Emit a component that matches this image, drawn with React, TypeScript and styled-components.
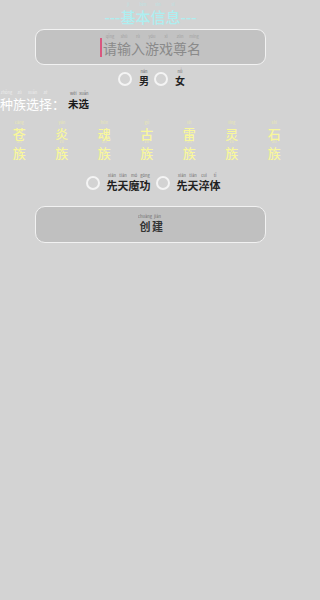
import React from 'react';
import styled, { createGlobalStyle } from 'styled-components';

const GlobalStyle = createGlobalStyle`
  html, body {
    margin: 0;
    padding: 0;
    background-color: #d3d3d3;
    font-family: "Noto Sans CJK SC", "Noto Sans", sans-serif;
  }
`;

const Page = styled.div`
  width: 301px;
  height: 600px;
  display: flex;
  flex-direction: column;
  overflow: hidden;
`;

const Title = styled.div`
  padding-top: 8px;
  height: 21px;
  line-height: 17px;
  text-align: center;
  font-size: 15px;
  font-weight: 500;
  color: #aeeef0;
`;

const Field = styled.div`
  margin: 0 35px;
  height: 36px;
  box-sizing: border-box;
  border: 1.5px solid #f2f2f2;
  border-radius: 9px;
  background-color: #c2c2c2;
  display: flex;
  align-items: center;
  justify-content: center;
  font-size: 14px;
  color: #8a8a8a;
`;

const Caret = styled.span`
  width: 2px;
  height: 19px;
  margin-right: 1px;
  background-color: #d9577f;
`;

const OptionRow = styled.div<{ $height: number; $shift?: number; $top?: number }>`
  height: ${({ $height }) => $height}px;
  margin-top: ${({ $top }) => $top ?? 0}px;
  padding-left: ${({ $shift }) => $shift ?? 0}px;
  display: flex;
  align-items: center;
  justify-content: center;
  gap: 5px;
`;

const Option = styled.label`
  display: flex;
  align-items: center;
  gap: 7px;
`;

const Circle = styled.span`
  width: 14px;
  height: 14px;
  box-sizing: border-box;
  border: 2px solid #f4f4f4;
  border-radius: 50%;
`;

const OptionLabel = styled.span<{ $size: number }>`
  font-size: ${({ $size }) => $size}px;
  font-weight: 700;
  color: #222;
  line-height: 1;
`;

const RaceHeader = styled.div`
  height: 20px;
  display: flex;
  align-items: center;
`;

const RaceTitle = styled.span`
  font-size: 13px;
  color: #ffffff;
`;

const RaceValue = styled.span`
  margin-left: 3px;
  font-size: 10.5px;
  font-weight: 700;
  color: #1a1a1a;
`;

const RaceGrid = styled.div`
  margin: 10px 0 0 -2px;
  display: grid;
  grid-template-columns: repeat(7, 42.5px);
`;

const RaceCell = styled.div`
  display: flex;
  flex-direction: column;
  align-items: center;
  font-size: 13px;
  font-weight: 500;
  line-height: 15px;
  color: #f8f79c;
`;

const Button = styled.button`
  margin: 12px 35px 0;
  height: 37px;
  box-sizing: border-box;
  border: 1.5px solid #f2f2f2;
  border-radius: 10px;
  background-color: #c0c0c0;
  font-family: inherit;
  font-size: 11px;
  font-weight: 700;
  color: #333;
  padding: 0;
`;

const Rb = styled.ruby`
  ruby-position: over;
  rt {
    position: relative;
    top: -2px;
    font-size: 4px;
    line-height: 1;
    font-weight: 400;
    opacity: 0.6;
  }
`;

const Py = ({ text, py }: { text: string; py: string[] }) => (
  <>
    {text.split('').map((ch, i) =>
      py[i] ? (
        <Rb key={i}>
          {ch}
          <rt>{py[i]}</rt>
        </Rb>
      ) : (
        <span key={i}>{ch}</span>
      )
    )}
  </>
);

const races = [
  { name: '苍', py: 'cāng' },
  { name: '炎', py: 'yán' },
  { name: '魂', py: 'hún' },
  { name: '古', py: 'gǔ' },
  { name: '雷', py: 'léi' },
  { name: '灵', py: 'líng' },
  { name: '石', py: 'shí' },
];

const App = () => {
  return (
    <Page>
      <GlobalStyle />
      <Title>
        ---<Py text="基本信息" py={['jī', 'běn', 'xìn', 'xī']} />---
      </Title>
      <Field>
        <Caret />
        <Py text="请输入游戏尊名" py={['qǐng', 'shū', 'rù', 'yóu', 'xì', 'zūn', 'míng']} />
      </Field>
      <OptionRow $height={27} $shift={2}>
        <Option>
          <Circle />
          <OptionLabel $size={10}>
            <Py text="男" py={['nán']} />
          </OptionLabel>
        </Option>
        <Option>
          <Circle />
          <OptionLabel $size={10}>
            <Py text="女" py={['nǚ']} />
          </OptionLabel>
        </Option>
      </OptionRow>
      <RaceHeader>
        <RaceTitle>
          <Py text="种族选择：" py={['zhǒng', 'zú', 'xuǎn', 'zé']} />
        </RaceTitle>
        <RaceValue>
          <Py text="未选" py={['wèi', 'xuǎn']} />
        </RaceValue>
      </RaceHeader>
      <RaceGrid>
        {races.map((r) => (
          <RaceCell key={r.name}>
            <Py text={r.name} py={[r.py]} />
            <Py text="族" py={['zú']} />
          </RaceCell>
        ))}
      </RaceGrid>
      <OptionRow $height={22} $shift={5} $top={12}>
        <Option>
          <Circle />
          <OptionLabel $size={11}>
            <Py text="先天魔功" py={['xiān', 'tiān', 'mó', 'gōng']} />
          </OptionLabel>
        </Option>
        <Option>
          <Circle />
          <OptionLabel $size={11}>
            <Py text="先天淬体" py={['xiān', 'tiān', 'cuì', 'tǐ']} />
          </OptionLabel>
        </Option>
      </OptionRow>
      <Button>
        <Py text="创建" py={['chuàng', 'jiàn']} />
      </Button>
    </Page>
  );
};

export default App;
